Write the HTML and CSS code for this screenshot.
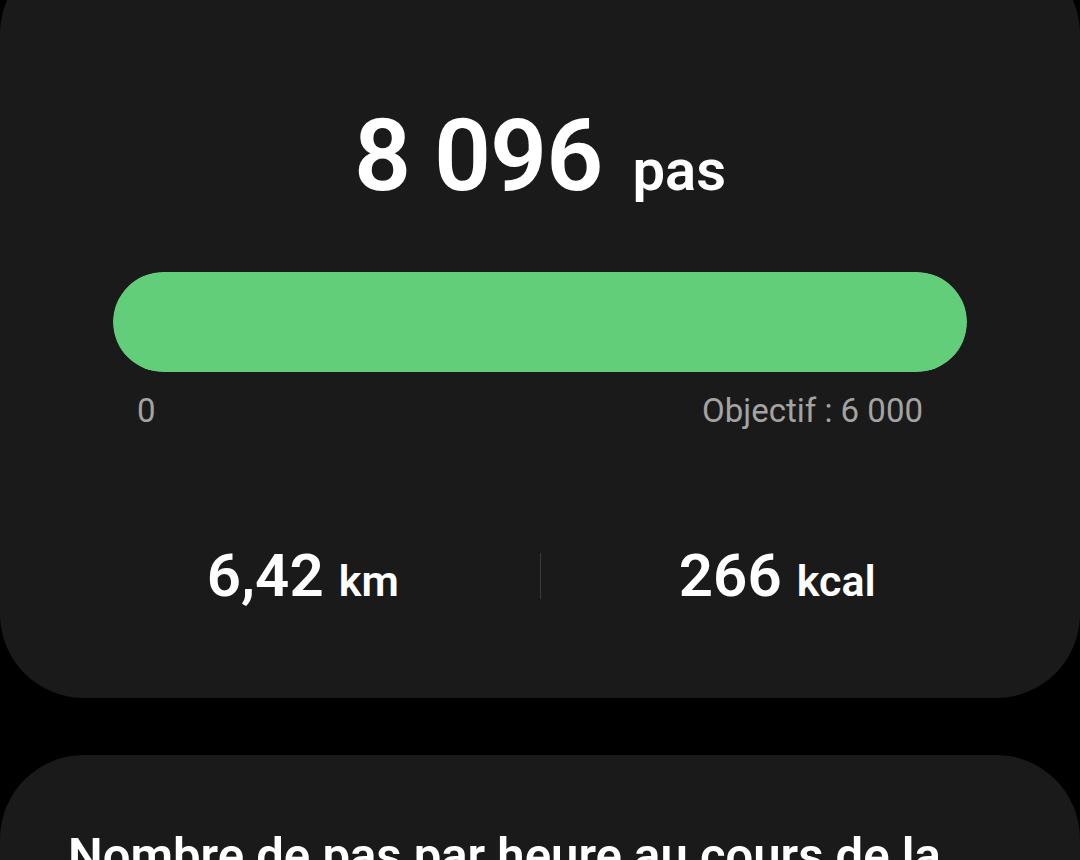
FILE: index.html
```html
<!DOCTYPE html>
<html lang="fr">
<head>
<meta charset="utf-8">
<title>Pas</title>
<link rel="stylesheet" href="styles.css">
</head>
<body>
<main class="page">
  <section class="card steps-card">
    <div class="steps-total">
      <span class="steps-value">8 096</span>
      <span class="steps-unit">pas</span>
    </div>
    <div class="progress">
      <div class="progress-fill" style="width:100%"></div>
    </div>
    <div class="progress-labels">
      <span>0</span>
      <span>Objectif : 6 000</span>
    </div>
    <div class="stats">
      <div class="stat"><span class="stat-value">6,42</span><span class="stat-unit">km</span></div>
      <div class="stat-divider"></div>
      <div class="stat"><span class="stat-value">266</span><span class="stat-unit">kcal</span></div>
    </div>
  </section>
  <section class="card hourly-card">
    <h2 class="hourly-title">Nombre de pas par heure au cours de la journée</h2>
  </section>
</main>
</body>
</html>
```
FILE: styles.css
```css
html, body {
  margin: 0;
  padding: 0;
  background: #000;
  overflow: hidden;
}
body {
  font-family: Roboto, "Liberation Sans", sans-serif;
  color: #fff;
  height: 860px;
}
.page {
  display: flex;
  flex-direction: column;
  gap: 57px;
  margin-top: -50px;
}
.card {
  background: #1a1a1a;
  border-radius: 84px;
}
.steps-card {
  padding: 156px 113px 0 113px;
  box-sizing: border-box;
  height: 748px;
}
.steps-total {
  display: flex;
  justify-content: center;
  align-items: baseline;
  gap: 30px;
  line-height: 1;
}
.steps-value {
  font-size: 100px;
  font-weight: 600;
  letter-spacing: -1px;
}
.steps-unit {
  font-size: 58px;
  font-weight: 600;
}
.progress {
  margin-top: 66px;
  height: 100px;
  border-radius: 50px;
  background: #333;
  overflow: hidden;
}
.progress-fill {
  height: 100%;
  background: #62ce7a;
  border-radius: 50px;
}
.progress-labels {
  display: flex;
  justify-content: space-between;
  padding: 0 44px 0 24px;
  margin-top: 20px;
  font-size: 33px;
  color: #a3a3a3;
  line-height: 38px;
}
.stats {
  display: flex;
  align-items: center;
  margin: 116px -47px 0 -47px;
}
.stat {
  flex: 1;
  display: flex;
  justify-content: center;
  align-items: baseline;
  gap: 15px;
  line-height: 1;
}
.stat-value {
  font-size: 60px;
  font-weight: 600;
}
.stat-unit {
  font-size: 43px;
  font-weight: 600;
}
.stat-divider {
  width: 1px;
  height: 46px;
  background: #3a3a3a;
}
.hourly-card {
  padding: 71px 68px 40px 68px;
  min-height: 300px;
}
.hourly-title {
  margin: 0;
  font-size: 49px;
  font-weight: 600;
  line-height: 60px;
}
```
